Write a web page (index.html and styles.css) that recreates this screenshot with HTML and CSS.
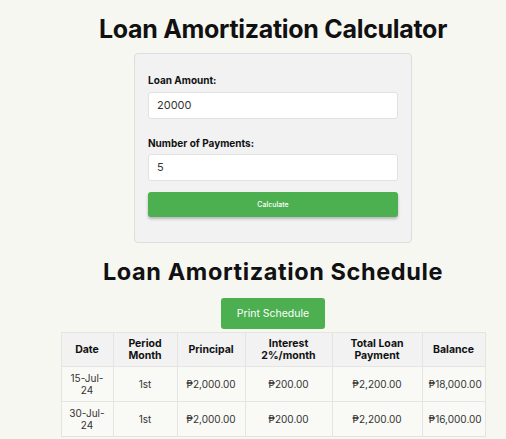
FILE: index.html
```html
<!DOCTYPE html>
<html>
<head>
<meta charset="utf-8">
<link rel="stylesheet" href="styles.css">
</head>
<body>
<div class="page">
  <h1 class="title">Loan Amortization Calculator</h1>
  <div class="card">
    <label class="label">Loan Amount:</label>
    <div class="input">20000</div>
    <label class="label second">Number of Payments:</label>
    <div class="input">5</div>
    <div class="btn-calc">Calculate</div>
  </div>
  <h2 class="subtitle">Loan Amortization Schedule</h2>
  <div class="btn-print">Print Schedule</div>
  <table class="schedule">
    <colgroup>
      <col class="c1"><col class="c2"><col class="c3"><col class="c4"><col class="c5"><col class="c6">
    </colgroup>
    <thead>
      <tr><th>Date</th><th>Period Month</th><th>Principal</th><th>Interest 2%/month</th><th>Total Loan Payment</th><th>Balance</th></tr>
    </thead>
    <tbody>
      <tr><td>15-Jul-24</td><td>1st</td><td>₱2,000.00</td><td>₱200.00</td><td>₱2,200.00</td><td>₱18,000.00</td></tr>
      <tr><td>30-Jul-24</td><td>1st</td><td>₱2,000.00</td><td>₱200.00</td><td>₱2,200.00</td><td>₱16,000.00</td></tr>
    </tbody>
  </table>
</div>
</body>
</html>
```
FILE: styles.css
```css
html, body {
  margin: 0;
  padding: 0;
  background: #f7f7f2;
  font-family: Inter, "Noto Sans", sans-serif;
  color: #111;
  overflow: hidden;
  height: 439px;
}
.page {
  display: flex;
  flex-direction: column;
  align-items: center;
  padding-left: 40px;
}
.title {
  margin: 13px 0 0 0;
  font-size: 25px;
  line-height: 32px;
  font-weight: 700;
  letter-spacing: -0.3px;
}
.card {
  margin-top: 8px;
  width: 250px;
  padding: 19px 13px 25px 13px;
  background: #f2f2f2;
  border: 1px solid #dedede;
  border-radius: 4px;
  display: flex;
  flex-direction: column;
}
.label {
  font-size: 10px;
  font-weight: 700;
  line-height: 14px;
  margin-bottom: 5px;
}
.label.second { margin-top: 17px; margin-bottom: 4px; }
.input {
  height: 25px;
  background: #fff;
  border: 1px solid #e2e2e2;
  border-radius: 3px;
  font-size: 11px;
  line-height: 25px;
  padding-left: 8px;
  color: #333;
}
.btn-calc {
  margin-top: 11px;
  height: 25px;
  background: #4caf50;
  border-radius: 3px;
  color: #fff;
  font-size: 7px;
  font-weight: 500;
  line-height: 25px;
  text-align: center;
  box-shadow: 0 2px 3px rgba(0,0,0,0.25);
}
.subtitle {
  margin: 14px 0 0 0;
  font-size: 23.5px;
  line-height: 30px;
  font-weight: 700;
  letter-spacing: 0.6px;
}
.btn-print {
  margin-top: 11px;
  width: 104px;
  height: 31px;
  background: #4caf50;
  border-radius: 3px;
  color: #fff;
  font-size: 10.5px;
  line-height: 31px;
  text-align: center;
}
.schedule {
  margin-top: 3px;
  width: 424px;
  table-layout: fixed;
  border-collapse: collapse;
  font-size: 10px;
}
.c1 { width: 52px; }
.c2 { width: 64px; }
.c3 { width: 68px; }
.c4 { width: 87px; }
.c5 { width: 90px; }
.c6 { width: 63px; }
.schedule th, .schedule td {
  border: 1px solid #e4e4e0;
  text-align: center;
  padding: 0 6px;
  height: 34px;
  line-height: 12px;
}
.schedule th {
  background: #f2f2f2;
  font-weight: 700;
  font-size: 10.5px;
  height: 33px;
}
.schedule td {
  background: #f9f9f5;
  color: #333;
  font-size: 10px;
}
```
